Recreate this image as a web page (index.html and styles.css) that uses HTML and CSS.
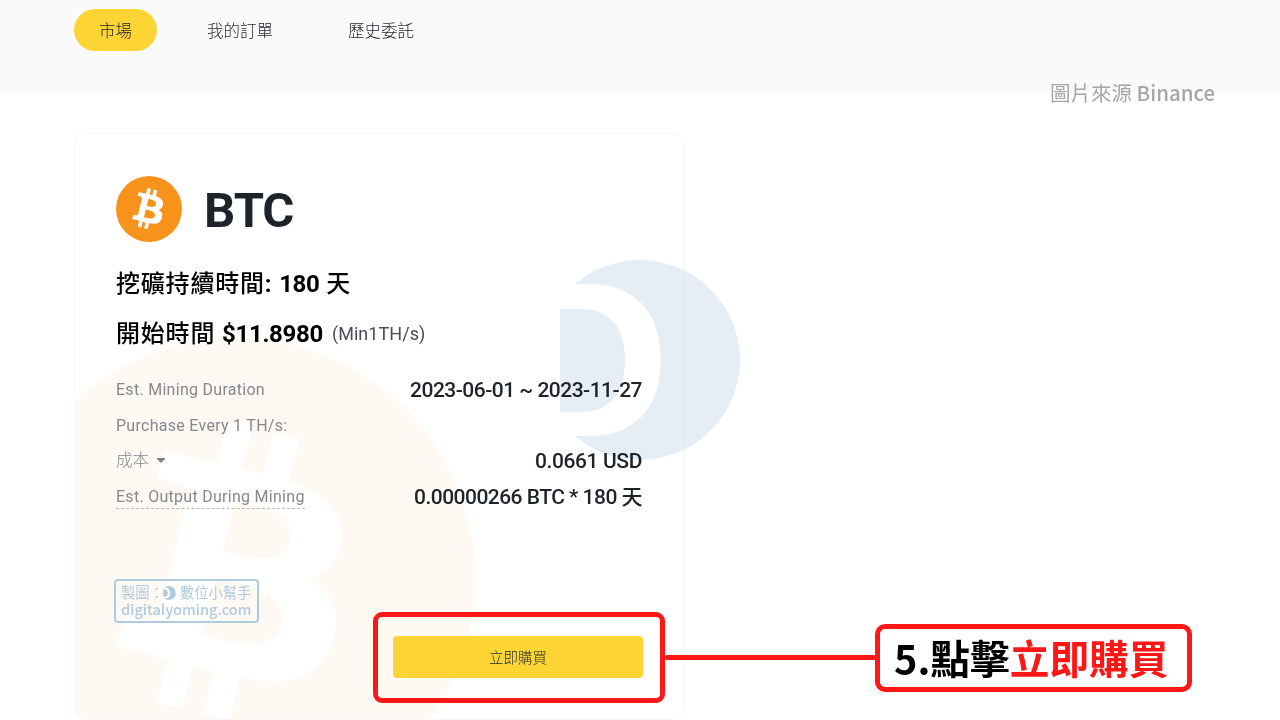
FILE: index.html
```
<!DOCTYPE html>
<html lang="zh-Hant">
<head>
  <meta charset="UTF-8">
  <meta name="viewport" content="width=device-width, initial-scale=1.0">
  <title>BTC</title>
  <link rel="stylesheet" href="styles.css">
</head>
<body>
  <svg width="0" height="0" class="defs">
    <symbol id="btc" viewBox="0 0 32 32">
      <path d="M23.189 14.02c.314-2.096-1.283-3.223-3.465-3.975l.708-2.84-1.728-.43-.69 2.765c-.454-.114-.92-.22-1.385-.326l.695-2.783L15.596 6l-.708 2.839c-.376-.086-.746-.17-1.104-.26l.002-.009-2.384-.595-.46 1.846s1.283.294 1.256.312c.7.175.826.638.805 1.006l-.806 3.235c.048.012.11.03.18.057l-.183-.045-1.13 4.532c-.086.212-.303.531-.793.41.018.025-1.256-.313-1.256-.313l-.858 1.978 2.25.561c.418.105.828.215 1.231.318l-.715 2.872 1.727.43.708-2.84c.472.127.93.245 1.378.357l-.706 2.828 1.728.43.715-2.866c2.948.558 5.164.333 6.097-2.333.752-2.146-.037-3.385-1.588-4.192 1.13-.26 1.98-1.003 2.207-2.538zm-3.95 5.538c-.533 2.147-4.148.986-5.32.695l.95-3.805c1.172.293 4.929.872 4.37 3.11zm.535-5.569c-.487 1.953-3.495.96-4.47.717l.86-3.45c.975.243 4.118.696 3.61 2.733z"/>
    </symbol>
    <symbol id="moon" viewBox="0 0 180 200">
      <path d="M15 24A100 100 0 1 1 15 176H29C75 176 100.700 148 100.700 100S75 24 29 24Z"/>
      <path d="M0 49H22C50 49 65 68 65 100S50 152 22 152H0Z"/>
    </symbol>
  </svg>

  <header class="topbar">
    <nav class="tabs">
      <a class="tab active">市場</a>
      <a class="tab">我的訂單</a>
      <a class="tab">歷史委託</a>
    </nav>
  </header>

  <main>
    <section class="card">
      <svg class="card-bg" viewBox="0 0 608 584">
        <circle cx="161" cy="444" r="239.500"/>
        <use href="#btc" x="-82.600" y="196.300" width="481.300" height="481.300"/>
      </svg>
      <div class="coin">
        <svg class="coin-icon" viewBox="0 0 32 32">
          <circle cx="16" cy="16" r="16"/>
          <use href="#btc" x="-0.400" y="-0.200" width="32" height="32"/>
        </svg>
        <h1>BTC</h1>
      </div>
      <h2>挖礦持續時間<b>: </b><span class="num">180</span> 天</h2>
      <h2>開始時間 <span class="num">$11.8980</span><small>(Min1TH/s)</small></h2>
      <dl class="details">
        <div class="row"><dt>Est. Mining Duration</dt><dd>2023-06-01 ~ 2023-11-27</dd></div>
        <div class="row"><dt>Purchase Every 1 TH/s:</dt></div>
        <div class="row cost-row"><dt class="cost">成本<svg width="8" height="5" viewBox="0 0 8 5"><path d="M0 0H8V1L4 5L0 1Z"/></svg></dt><dd class="usd">0.0661 USD</dd></div>
        <div class="row output-row"><dt class="output">Est. Output During Mining</dt><dd>0.00000266 BTC * 180 <span>天</span></dd></div>
      </dl>
      <button class="buy">立即購買</button>
    </section>
  </main>

  <svg class="moon-mark"><use href="#moon"/></svg>
  <div class="source">圖片來源 <span>Binance</span></div>
  <div class="credit">
    <div>製圖：<svg width="13" height="14"><use href="#moon"/></svg><span>數位小幫手</span></div>
    <div class="site">digitalyoming.com</div>
  </div>
  <div class="highlight"></div>
  <div class="line"></div>
  <div class="step">5.點擊<em>立即購買</em></div>
</body>
</html>
```
FILE: styles.css
```
* {
  box-sizing: border-box;
}
body {
  margin: 0;
  height: 720px;
  overflow: hidden;
  position: relative;
  background: #fff;
  color: #1e2329;
  font-family: Roboto, "Noto Sans CJK TC", sans-serif;
}
h1, h2, dl, dd {
  margin: 0;
}
.defs {
  position: absolute;
}
.topbar {
  height: 93px;
  background: #fafafa;
  padding: 9px 74px;
}
.tabs {
  display: flex;
  gap: 25px;
}
.tab {
  height: 42px;
  line-height: 42px;
  padding: 2px 25px 0;
  border-radius: 21px;
  font-size: 16.5px;
  font-weight: 300;
}
.tab.active {
  background: #fcd535;
}
main {
  padding: 40px 74px 0;
}
.card {
  position: relative;
  width: 610px;
  height: 587px;
  border: 1px solid #f7f7f7;
  border-radius: 11px;
  padding: 41px 41px 0;
  overflow: hidden;
}
.card > * {
  position: relative;
}
.card .card-bg {
  position: absolute;
  left: 0;
  top: 0;
  width: 608px;
  height: 584px;
  overflow: visible;
}
.card-bg circle {
  fill: #fef9f3;
}
.card-bg use {
  fill: #fff;
}
.coin {
  display: flex;
  align-items: center;
  gap: 22px;
  height: 68px;
}
.coin-icon {
  width: 66px;
  height: 66px;
  margin-top: -1px;
}
.coin-icon circle {
  fill: #f7931a;
}
.coin-icon use {
  fill: #fff;
}
h1 {
  font-size: 49px;
  line-height: 68px;
  font-weight: 700;
  letter-spacing: -1px;
  padding-top: 3px;
}
h2 {
  display: flex;
  height: 50px;
  line-height: 50px;
  font-size: 24px;
  font-weight: 500;
  letter-spacing: 0.8px;
  color: #000;
  white-space: pre;
}
.coin + h2 {
  margin-top: 16px;
}
.num {
  font-weight: 700;
  letter-spacing: -0.3px;
}
small {
  font-size: 18px;
  font-weight: 400;
  letter-spacing: 0.05px;
  color: #474d57;
  margin-left: 9px;
}
.details {
  padding-top: 13px;
}
.row {
  display: flex;
  justify-content: space-between;
  align-items: center;
  height: 36px;
}
.cost-row {
  height: 34px;
}
.output-row {
  height: 38px;
}
dt {
  font-size: 16px;
  line-height: 24px;
  letter-spacing: 0.28px;
  color: #85888e;
}
dd {
  font-size: 21px;
  line-height: 30px;
  font-weight: 500;
  letter-spacing: -0.52px;
  white-space: nowrap;
}
.usd {
  letter-spacing: -0.38px;
}
.cost {
  font-weight: 300;
  font-size: 16.5px;
  letter-spacing: 0;
}
.cost svg {
  margin-left: 8px;
  vertical-align: 3px;
  fill: #76808f;
}
.output {
  line-height: 23px;
  border-bottom: 1px dashed #bbb;
}
.buy {
  display: block;
  width: 250px;
  height: 42px;
  margin: 120px -1px 0 auto;
  border: 0;
  border-radius: 4px;
  background: #fcd535;
  color: #1e2329;
  font: 300 14.5px/42px "Noto Sans CJK TC", sans-serif;
  padding: 0;
}

/* annotations over the page */
.moon-mark {
  position: absolute;
  left: 560px;
  top: 260px;
  width: 180px;
  height: 200px;
  fill: #b3cde2;
  opacity: 0.34;
  mix-blend-mode: multiply;
}
.source, .credit, .step {
  font-family: "Noto Sans CJK TC", sans-serif;
}
.source {
  position: absolute;
  left: 1050px;
  top: 77px;
  font-size: 20.5px;
  line-height: 30px;
  color: #a6a6a6;
  white-space: nowrap;
}
.source span {
  font-weight: 500;
}
.credit {
  position: absolute;
  left: 114px;
  top: 579px;
  width: 145px;
  height: 44px;
  border: 2px solid #b0cbe0;
  border-radius: 4px;
  padding: 2px 0 0 5px;
  font-size: 14.3px;
  line-height: 17px;
  color: #b0cbe0;
  white-space: nowrap;
}
.credit div {
  display: flex;
  align-items: center;
}
.credit svg {
  fill: #b0cbe0;
  margin: 2px 0 0 -1px;
}
.credit span {
  margin-left: 4px;
}
.credit .site {
  font-size: 14.6px;
  font-weight: 500;
}
.highlight {
  position: absolute;
  left: 373px;
  top: 612px;
  width: 292px;
  height: 91px;
  border: 5px solid #ff1616;
  border-radius: 9px;
}
.line {
  position: absolute;
  left: 665px;
  top: 655px;
  width: 211px;
  height: 5px;
  border-radius: 2px;
  background: #ff1616;
}
.step {
  position: absolute;
  left: 875px;
  top: 624px;
  width: 317px;
  height: 68px;
  border: 5px solid #ff1616;
  border-radius: 10px;
  padding-left: 14px;
  font-size: 39.7px;
  line-height: 56px;
  font-weight: 700;
  color: #000;
  white-space: nowrap;
}
.step em {
  font-style: normal;
  color: #ff1616;
}
```
